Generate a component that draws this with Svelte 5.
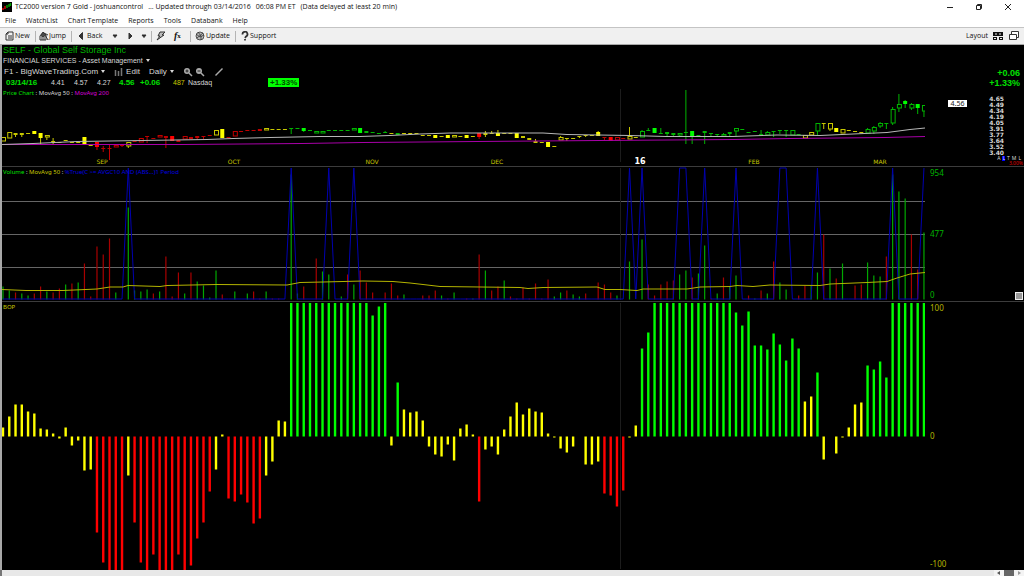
<script lang="ts">
  type Candle = {
    color: string;
    filled: boolean;
    top: number;
    bottom: number;
    high: number;
    low: number;
  };

  const colors: Record<string, string> = { y: '#c8c800', g: '#00b400', r: '#c00000' };
  const brights: Record<string, string> = { y: '#ffff00', g: '#00ff00', r: '#ff0000' };

  const step = 6.265;
  const xAt = (i: number) => 1 + i * step;

  // colour, hollow (h) / filled (f), body top, body bottom, high, low
  const candleData = `
    yh 51 55|yh 46 52|yf 47 49 47 51|yf 47 49 47 51|yf 47 48|yf 45 48|yf 47 52 47 58|yh 49 51 49 54|yf 55 56 52 58|yf 56 57
    yf 54 55|yf 56 57|yf 56 57|yf 51 59|yf 58 60|rf 56 61 56 64|rf 62 63 60 66|rf 62 63 59 74|rh 59 61|rf 59 60 58 61
    yh 56 60 56 62|rf 55 56|rh 52 56|rf 50 51 50 57|rf 52 53|rh 49 51|rf 50 52 50 62|rf 50 55|rf 54 56|rh 50 53
    rf 51 53|rf 50 52 50 54|rf 50 51 50 53|rf 49 50|yh 44 49|yf 43 52|rf 51 52|rh 45 50|rf 45 46|rf 44 45
    rf 44 45|rf 43 45|yh 42 44|yf 43 44|yf 43 44|yf 43 44|gf 42 43 42 48|gf 42 43|gf 42 45 42 46|gf 44 45
    gh 45 47|gh 45 47|gf 44 45|gf 44 45|gf 44 45|gf 44 45|gh 42 44|gf 42 47|gf 45 47|gf 46 47
    gf 47 48|gf 46 47 45 47|yf 47 48|gf 47 49|yf 47 48|yf 47 48|yf 47 48|yf 49 50|yf 49 50|yf 49 52
    yf 50 51|yf 49 52|yh 49 51|yf 50 51|yf 49 52|yf 50 51|rf 47 51 47 53|yf 47 49 45 51|yf 47 48 45 48|yf 47 50 44 50
    yf 47 48|yf 47 48|yf 47 52|yf 50 52|yf 52 54|yf 55 57 53 57|yf 56 57|yf 56 61|yf 60 61|yh 51 54 50 54
    yf 52 53 52 55|yf 52 53|yf 50 51 50 52|yf 49 50 49 51|yf 49 50|yf 46 50 45 50|rf 51 52 51 54|rf 51 55|rh 51 54|rf 52 53
    yh 50 53 41 53|yf 51 52|gh 45 51 44 51|gf 44 45 42 45|gf 42 47|gf 47 48 42 48|gf 46 48 46 50|gf 47 49 47 50|gh 47 49 47 51|gf 46 47 4 58
    gf 45 50 45 58|gf 49 50|gf 45 47 45 58|gf 47 48 47 51|gf 48 49 48 50|gh 48 50 47 51|gf 46 48 46 51|gh 42 45 42 50|gf 43 44|gf 46 47
    gf 45 46|gf 48 49 44 49|gh 46 49 45 49|gf 45 46 45 51|gf 44 45 44 48|gf 44 45 44 51|gh 44 49|gf 48 49|yh 49 52|yh 46 49
    gh 37 45 37 49|yf 37 38 37 43|yh 37 43 37 45|yf 42 46|yh 43 47|yf 44 45|yf 45 46|yf 46 47|gh 43 47 42 47|gh 41 45 40 48
    gh 37 40 36 42|gf 37 38 37 43|gh 23 37 21 39|gh 18 22 8 26|gf 15 18 14 22|gh 18 22 17 24|gf 18 22 18 28|gh 19 25 19 31`;

  const candles: Candle[] = candleData
    .trim()
    .split(/\||\n/)
    .map((entry) => {
      const [kind, top, bottom, high = top, low = bottom] = entry.trim().split(' ');
      return {
        color: kind[0],
        filled: kind[1] === 'f',
        top: +top,
        bottom: +bottom,
        high: +high,
        low: +low
      };
    });

  const volumeData = `
    g13 g9 r7 g6 g4 r6 r13 g8 r7 r11 g15 r16 g17 r36 r3 r53 r45 r61 g7 g0
    g92 g9 g8 g10 r6 g8 r43 r3 r27 g6 r27 g18 g14 g2 g29 r5 g0 g8 g0 g6
    r8 r1 g8 r1 r1 g0 g125 g6 r13 g0 r41 g28 g25 g0 g3 r25 g15 r29 r17 r7
    g0 r7 r16 r4 g5 g0 g0 r4 r4 r9 g4 r1 g7 g0 r1 g1 r45 g29 r9 r13
    g19 r3 r1 r12 r1 r16 r1 r20 g3 g7 r9 g5 g3 r6 g0 r17 r15 r7 g4 g0
    g38 g0 g60 r15 r4 r15 r18 r19 g25 g29 r22 g26 g54 r1 g6 r22 g13 g24 g0 r4
    g1 r9 g6 r38 g17 g10 g0 r4 r14 g14 g27 r65 g31 r21 g36 g0 r14 r15 g37 g24
    g23 r43 g125 g108 g101 r65 r30 g67`;

  const volume = volumeData
    .trim()
    .split(/\s+/)
    .map((v) => ({ color: v[0], size: +v.slice(1) }));

  const trueDays = [20, 46, 52, 56, 100, 102, 108, 109, 112, 117, 124, 125, 130, 142, 147];
  const signal = volume
    .map((_, i) => `${xAt(i)},${trueDays.includes(i) ? 1 : 132}`)
    .join(' ');

  const bop = [
    9, 20, 32, 32, 25, 23, 8, 7, 3, -2, 9, -9, -4, -34, -33, -96, -126, -134, -134, -134,
    -39, -86, -126, -134, -118, -134, -134, -134, -118, -134, -129, -102, -86, -55, -33, 2, -62, -65, -58, -66,
    -87, -82, -39, -25, 16, 15, 134, 134, 134, 134, 134, 134, 134, 134, 134, 134, 134, 134, 134, 121,
    130, 134, -9, 54, 27, 24, 25, 16, -10, -18, -20, -8, -24, 8, 12, 2, -65, -13, -10, -18,
    7, 20, 34, 22, 28, 25, 24, 3, -1, -12, -16, -10, 0, -28, -28, -25, -57, -59, -70, -54,
    -1, 11, 88, 104, 134, 134, 134, 134, 134, 134, 134, 134, 134, 134, 134, 134, 134, 124, 111, 125,
    91, 91, 87, 103, 92, 76, 98, 88, 35, 40, 64, -23, 0, -17, -1, 9, 32, 34, 71, 67,
    75, 59, 134, 134, 134, 134, 134, 134
  ];

  function bopColor(v: number) {
    if (v > 45) return '#00ff00';
    if (v < -45) return '#ff0000';
    return '#ffff00';
  }

  const months = [
    { name: 'SEP', x: 100 },
    { name: 'OCT', x: 232 },
    { name: 'NOV', x: 370 },
    { name: 'DEC', x: 495 },
    { name: '16', x: 638, year: true },
    { name: 'FEB', x: 752 },
    { name: 'MAR', x: 878 }
  ];

  const menus = ['File', 'WatchList', 'Chart Template', 'Reports', 'Tools', 'Databank', 'Help'];
  const prices = ['4.65', '4.49', '4.34', '4.19', '4.05', '3.91', '3.77', '3.64', '3.52', '3.40'];
</script>

<div class="app">
  <header class="titlebar">
    <svg class="titlebar__logo" viewBox="0 0 10 10" aria-hidden="true">
      <rect width="10" height="10" fill="#000" />
      <path d="M1 8V6M3 7V4" stroke="#e00000" stroke-width="1.4" />
      <path d="M5 6V3M7 5V2M8.5 4V1" stroke="#00a000" stroke-width="1.4" />
    </svg>
    <h1 class="titlebar__text">
      <span>TC2000 version 7 Gold - joshuancontrol</span>
      <span>... Updated through 03/14/2016</span>
      <span>06:08 PM ET</span>
      <span>(Data delayed at least 20 min)</span>
    </h1>
    <div class="titlebar__controls">
      <button aria-label="Minimize">
        <svg viewBox="0 0 8 8"><path d="M1 4.5h6" /></svg>
      </button>
      <button aria-label="Restore">
        <svg viewBox="0 0 8 8"><path d="M1.5 2.5h4v4h-4zM2.5 2.5v-1h4v4h-1" /></svg>
      </button>
      <button aria-label="Close">
        <svg viewBox="0 0 8 8"><path d="M1 1l6 6M7 1L1 7" /></svg>
      </button>
    </div>
  </header>

  <nav class="menubar">
    {#each menus as menu}
      <button>{menu}</button>
    {/each}
  </nav>

  <div class="toolbar">
    <button class="toolbar__new">
      <svg viewBox="0 0 10 10" aria-hidden="true">
        <path d="M3 1h5v8H1V3zM3 1v2H1M3 5h4M3 7h4" />
      </svg>New
    </button>
    <i class="toolbar__line"></i>
    <button class="toolbar__jump">
      <svg viewBox="0 0 10 10" aria-hidden="true">
        <path d="M1 9V5l3-4 3 3v5zM3 9V5h2v4M6 4l3 5M5 2l4 2" />
        <circle cx="4" cy="4" r="1.5" fill="#555" />
      </svg>Jump
    </button>
    <i class="toolbar__line"></i>
    <button class="toolbar__back">
      <svg viewBox="0 0 10 10" aria-hidden="true"><path d="M6.5 1.5v7L3 5z" fill="#333" /></svg>Back
    </button>
    <button class="toolbar__drop" aria-label="Back history">
      <svg viewBox="0 0 10 10" aria-hidden="true"><path d="M3 4h4L5 6.500z" fill="#222" /></svg>
    </button>
    <button class="toolbar__forward" aria-label="Forward">
      <svg viewBox="0 0 10 10" aria-hidden="true"><path d="M4 2l3 3-3 3z" fill="#333" /></svg>
    </button>
    <button class="toolbar__drop2" aria-label="Forward history">
      <svg viewBox="0 0 10 10" aria-hidden="true"><path d="M3 4h4L5 6.500z" fill="#222" /></svg>
    </button>
    <i class="toolbar__line"></i>
    <button class="toolbar__flash" aria-label="EasyScan">
      <svg viewBox="0 0 10 10" aria-hidden="true"><path d="M4 1h5L6 4h2L1 9l3-4H2z" fill="#bbb" /></svg>
    </button>
    <button class="toolbar__fx" aria-label="Formula"><em>f</em><small>x</small></button>
    <i class="toolbar__line"></i>
    <button class="toolbar__update">
      <svg viewBox="0 0 10 10" aria-hidden="true">
        <circle cx="5" cy="5" r="4" fill="#bbb" stroke-width=".8" />
        <path d="M1 3l4 3 4-2M3 1l3 4v4M2 7l6-5" stroke-width=".8" />
      </svg>Update
    </button>
    <i class="toolbar__line"></i>
    <button class="toolbar__support">
      <svg viewBox="0 0 10 10" aria-hidden="true">
        <path d="M2.500 3.500a2.500 2.500 0 1 1 3.500 2L5 7M5 8v1.500" stroke-width="1.8" />
      </svg>Support
    </button>
    <div class="toolbar__right">
      <button class="toolbar__layout">Layout
        <svg viewBox="0 0 10 10" aria-hidden="true">
          <path d="M0 1h10v4H0zM0 6h4v3H0zM6 6h4v3H6z" fill="#111" stroke="none" />
          <path d="M2 3h2M6 3h2M1 7.500h2M7 7.500h2" stroke="#eee" />
        </svg>
      </button>
      <button aria-label="Cascade">
        <svg viewBox="0 0 10 10" aria-hidden="true">
          <path d="M2.500 3V.5h7v6H8" fill="#fff" />
          <path d="M.5 3.500h7v5h-7z" fill="#fff" />
        </svg>
      </button>
    </div>
  </div>

  <main class="charts">
    <section class="pane price">
      <div class="plot">
        <div class="info">
          <h2>SELF - Global Self Storage Inc</h2>
          <button class="info__sector">FINANCIAL SERVICES - Asset Management <b class="caret"></b></button>
          <div class="info__tools">
            <button>F1 - BigWaveTrading.Com <b class="caret"></b></button>
            <button class="info__edit">
              <svg viewBox="0 0 10 10" aria-hidden="true">
                <path d="M1.500 3v6M4.500 4v5M7.500 1v8" stroke="#777" stroke-width="1.5" />
              </svg>Edit
            </button>
            <button>Daily <b class="caret"></b></button>
            <span class="info__zoom">
              <button aria-label="Zoom in">
                <svg viewBox="0 0 10 10"><circle cx="4" cy="4" r="3" fill="#aaa" /><path d="M6 6l3 3" stroke="#aaa" stroke-width="1.5" /><path d="M2.500 4h3M4 2.500v3" stroke="#222" /></svg>
              </button>
              <button aria-label="Zoom out">
                <svg viewBox="0 0 10 10"><circle cx="4" cy="4" r="3" fill="#aaa" /><path d="M6 6l3 3" stroke="#aaa" stroke-width="1.5" /><path d="M2.500 4h3" stroke="#222" /></svg>
              </button>
            </span>
            <button aria-label="Draw trendline">
              <svg viewBox="0 0 10 10"><path d="M1.500 8.500l7-7" stroke="#aaa" stroke-width="1.5" /></svg>
            </button>
          </div>
          <div class="info__quote">
            <b class="green">03/14/16</b>
            <span>4.41</span>
            <span>4.57</span>
            <span>4.27</span>
            <b class="green">4.56</b>
            <b class="green">+0.06</b>
            <span class="yellow">487</span>
            <span>Nasdaq</span>
            <b class="badge">+1.33%</b>
          </div>
        </div>
        <div class="canvas">
          <svg viewBox="0 0 923 80" preserveAspectRatio="none" role="img" aria-label="Price chart">
            <path d="M618.500 3V76" stroke="#1c1c1c" />
            {#each candles as c, i}
              <path
                d="M{xAt(i)} {c.high}V{c.top}M{xAt(i)} {c.bottom}V{c.low}"
                stroke={colors[c.color]}
              />
              {#if c.filled}
                <rect
                  x={xAt(i) - 2}
                  y={c.top}
                  width="4"
                  height={c.bottom - c.top}
                  fill={c.bottom - c.top > 2 ? brights[c.color] : colors[c.color]}
                />
              {:else}
                <rect
                  x={xAt(i) - 1.5}
                  y={c.top + 0.5}
                  width="4"
                  height={c.bottom - c.top - 0.5}
                  fill="#000"
                  stroke={colors[c.color]}
                />
              {/if}
            {/each}
            <polyline
              points="0,58.500 180,58.500 300,57.500 361,56.500 475,55.500 598,54.500 731,53.500 788,52.500 883,51.500 923,50.500"
              stroke="#a800a8"
            />
            <polyline
              points="0,58.500 31,57.500 75,55.500 141,54.500 205,53.500 231,52.500 268,51.500 318,50.500 358,50.500 388,49.500 418,48 448,47 541,47 565,48.500 628,49.500 664,50.500 731,50.500 775,49 818,49.500 851,48 885,46.500 908,43.500 923,42"
              stroke="#b8b8b8"
            />
          </svg>
          <p class="legend">
            <span class="green">Price Chart</span> : MovAvg 50 : <span class="magenta">MovAvg 200</span>
          </p>
          {#each months as month}
            <span class="month" class:month--year={month.year} style="left: {(month.x / 923) * 100}%">
              {month.name}
            </span>
          {/each}
        </div>
      </div>
      <aside class="axis price__axis">
        <strong class="price__change">+0.06<br />+1.33%</strong>
        <div class="price__scale">
          <span class="price__last">4.56</span>
          <ol>
            {#each prices as price}
              <li>{price}</li>
            {/each}
          </ol>
        </div>
        <div class="price__modes">
          <button>A</button><button class="selected">L</button><button>T</button><button>M</button><button>L</button>
        </div>
        <span class="price__pct">3.00%</span>
      </aside>
    </section>

    <section class="pane volume">
      <div class="plot canvas">
        <svg viewBox="0 0 923 134" preserveAspectRatio="none" role="img" aria-label="Volume chart">
          <path d="M0 34.500H923M0 67.500H923M0 100.500H923" stroke="#666" />
          <path d="M618.500 1V133" stroke="#1c1c1c" />
          {#each volume as v, i}
            <rect
              x={xAt(i) - 0.6}
              y={132.5 - v.size}
              width="1.2"
              height={v.size}
              fill={v.color === 'g' ? '#00a800' : '#a80000'}
            />
          {/each}
          <polyline points={signal} stroke="#0000b0" />
          <polyline
            points="0,122.500 24,123.500 61,123.500 95,122 108,120 121,120 126,118.500 158,119.500 165,118.500 215,117.500 285,118 298,115.500 321,115 361,114 391,114.500 408,116 421,117.500 438,119.500 518,120.500 526,121.500 541,120.500 595,120 603,122.500 618,122.500 635,123.500 641,122 685,122 698,120 728,119.500 735,118.500 751,119.500 768,118 818,118.500 828,117 865,115.500 885,114.500 895,111 908,107 923,105.500"
            stroke="#b4b400"
          />
        </svg>
        <p class="legend">
          <span class="green">Volume</span> : <span class="yellow">MovAvg 50</span> :
          <span class="blue">%True(C &gt;= AVGC10 AND (ABS...)1 Period</span>
        </p>
      </div>
      <aside class="axis volume__axis">
        <span>954</span>
        <span>477</span>
        <span>0</span>
      </aside>
      <button class="volume__grip" aria-label="Resize pane"></button>
    </section>

    <section class="pane bop">
      <div class="plot canvas">
        <svg viewBox="0 0 923 268" preserveAspectRatio="none" role="img" aria-label="Balance of power chart">
          <path d="M618.500 1V267" stroke="#1c1c1c" />
          {#each bop as v, i}
            {#if v}
              <rect
                x={xAt(i) - 1.2}
                y={v > 0 ? Math.max(1, 134.5 - v) : 134.5}
                width="2.4"
                height={Math.min(133.5, Math.abs(v))}
                fill={bopColor(v)}
              />
            {/if}
          {/each}
        </svg>
        <p class="legend"><span class="yellow">BOP</span></p>
      </div>
      <aside class="axis bop__axis">
        <span>100</span>
        <span>0</span>
        <span>-100</span>
      </aside>
    </section>
  </main>

  <footer class="scrollbar">
    <button aria-label="Scroll left"><svg viewBox="0 0 10 6"><path d="M6 1v4L3 3z" fill="#555" /></svg></button>
    <span class="scrollbar__thumb"></span>
    <button aria-label="Scroll right"><svg viewBox="0 0 10 6"><path d="M4 1v4l3-2z" fill="#999" /></svg></button>
  </footer>
</div>

<style>
  :global(body) {
    margin: 0;
    background: #000;
  }

  .app {
    display: flex;
    flex-direction: column;
    height: 100vh;
    min-height: 480px;
    font-family: 'Open Sans', 'Noto Sans', sans-serif;
    font-size: 7px;
    line-height: 10px;
    color: #111;
    overflow: hidden;
  }

  button {
    display: flex;
    align-items: center;
    padding: 0;
    border: 0;
    background: none;
    color: inherit;
    font: inherit;
    white-space: nowrap;
    cursor: pointer;
  }

  h1,
  h2,
  p,
  ol {
    margin: 0;
    padding: 0;
    font: inherit;
    list-style: none;
  }

  svg {
    display: block;
    fill: none;
    flex: none;
  }

  .titlebar {
    display: flex;
    align-items: center;
    height: 14px;
    padding-left: 2px;
    background: #fff;
  }

  .titlebar__logo {
    width: 10px;
    height: 10px;
    margin-right: 3px;
  }

  .titlebar__text {
    display: flex;
    gap: 5px;
    white-space: nowrap;
  }

  .titlebar__controls {
    display: flex;
    gap: 21px;
    margin-left: auto;
    padding-right: 12px;
  }

  .titlebar__controls svg {
    width: 8px;
    height: 8px;
    stroke: #222;
  }

  .menubar {
    display: flex;
    gap: 10px;
    height: 13px;
    padding-left: 5px;
    background: #fff;
  }

  .toolbar {
    display: flex;
    align-items: center;
    box-sizing: border-box;
    height: 18px;
    padding: 0 5px;
    border-top: 1px solid #c4c4c4;
    border-bottom: 1px solid #a8a8a8;
    background: #f0f0f0;
  }

  .toolbar svg {
    width: 10px;
    height: 10px;
    stroke: #333;
  }

  .toolbar__line {
    width: 1px;
    height: 11px;
    background: #b4b4b4;
  }

  .toolbar__new {
    width: 30px;
  }

  .toolbar__jump {
    width: 32px;
    margin-left: 3px;
  }

  .toolbar__back {
    gap: 1px;
    width: 34px;
    margin-left: 4px;
  }

  .toolbar__forward {
    margin: 0 4px 0 5px;
  }

  .toolbar__drop2 {
    margin-right: 2px;
  }

  .toolbar__flash {
    margin: 0 8px 0 4px;
  }

  .toolbar__fx {
    width: 16px;
    font-family: 'Liberation Serif', serif;
    font-size: 10px;
    font-weight: bold;
  }

  .toolbar__fx small {
    font-size: 7px;
  }

  .toolbar__update {
    gap: 1px;
    width: 40px;
    margin-left: 4px;
  }

  .toolbar__support {
    margin-left: 4px;
  }

  .toolbar__right {
    display: flex;
    gap: 6px;
    margin-left: auto;
  }

  .toolbar__layout {
    gap: 5px;
  }

  .charts {
    display: flex;
    flex: 1;
    flex-direction: column;
    min-height: 0;
    border-left: 2px solid #a8a8a8;
    background: #000;
    color: #d8d8d8;
    font-family: 'Liberation Sans', Arial, sans-serif;
    font-size: 8px;
  }

  .pane {
    position: relative;
    display: flex;
    box-sizing: border-box;
    min-height: 0;
    border-bottom: 1px solid #3c3c3c;
  }

  .price {
    flex: 121 1 0;
  }

  .volume {
    flex: 134 1 0;
  }

  .bop {
    flex: 268 1 0;
    border-bottom: 0;
  }

  .plot {
    display: flex;
    flex: 1;
    flex-direction: column;
    min-width: 0;
  }

  .canvas {
    position: relative;
    flex: 1;
    min-height: 0;
  }

  .canvas > svg {
    width: 100%;
    height: 100%;
  }

  .axis {
    box-sizing: border-box;
    flex: none;
    width: 99px;
    font-family: 'Noto Sans', sans-serif;
  }

  .legend {
    position: absolute;
    top: 0;
    left: 1px;
    font-family: 'Noto Sans', sans-serif;
    font-size: 6px;
    line-height: 10px;
    white-space: nowrap;
  }

  .price .legend {
    top: 2px;
  }

  .green {
    color: #00e000;
  }

  .yellow {
    color: #c8c800;
  }

  .magenta {
    color: #d800d8;
  }

  .blue {
    color: #0000e0;
  }

  .caret {
    margin-left: 3px;
    border: 2px solid transparent;
    border-top: 3px solid #d8d8d8;
    border-bottom: 0;
  }

  .info {
    height: 41px;
  }

  .info h2 {
    height: 11px;
    padding-left: 1px;
    color: #00b400;
    font-size: 9px;
    line-height: 11px;
  }

  .info__sector {
    padding-left: 1px;
    font-size: 7px;
    line-height: 9px;
  }

  .info__tools {
    display: flex;
    gap: 9px;
    align-items: center;
    height: 13px;
    padding-left: 2px;
  }

  .info__tools svg {
    width: 10px;
    height: 10px;
  }

  .info__edit {
    gap: 2px;
  }

  .info__zoom {
    display: flex;
    gap: 2px;
  }

  .info__quote {
    display: grid;
    grid-template-columns: 45px 23px 23px 22px 21px 33px 15px 80px auto;
    justify-content: start;
    padding-left: 4px;
    font-size: 7px;
    line-height: 9px;
  }

  .info__quote b {
    font-size: 8px;
  }

  .info__quote .badge {
    padding: 0 2px;
    background: #00ff00;
    color: #004800;
  }

  .month {
    position: absolute;
    bottom: 1px;
    color: #c8c800;
    font-family: 'DejaVu Sans', sans-serif;
    font-size: 6px;
    line-height: 6px;
    transform: translateX(-50%);
  }

  .month--year {
    color: #fff;
    font-size: 8px;
    font-weight: bold;
  }

  .price__axis {
    display: flex;
    flex-direction: column;
    align-items: flex-end;
    padding-top: 23px;
  }

  .price__change {
    padding-right: 4px;
    color: #00e000;
    font-family: 'Liberation Sans', Arial, sans-serif;
    font-size: 9px;
    line-height: 10px;
    text-align: right;
  }

  .price__scale {
    display: flex;
    justify-content: space-between;
    align-items: flex-start;
    box-sizing: border-box;
    width: 100%;
    padding: 8px 20px 0 23px;
  }

  .price__scale li {
    font-family: 'DejaVu Sans', sans-serif;
    font-size: 6px;
    font-weight: bold;
    line-height: 6px;
  }

  .price__last {
    width: 19px;
    margin-top: 4px;
    background: #fff;
    color: #222;
    font-size: 7px;
    line-height: 7px;
    text-align: center;
  }

  .price__modes {
    display: flex;
    gap: 2px;
    padding-right: 3px;
    font-size: 5px;
    line-height: 5px;
  }

  .price__modes .selected {
    background: #0000ff;
  }

  .price__pct {
    padding-right: 1px;
    color: #e00000;
    font-size: 5px;
    line-height: 5px;
  }

  .volume__axis,
  .bop__axis {
    display: flex;
    flex-direction: column;
    justify-content: space-between;
    padding: 1px 0 1px 5px;
  }

  .volume__axis {
    color: #00b400;
  }

  .bop__axis {
    color: #b4b400;
  }

  .volume__grip {
    position: absolute;
    right: 1px;
    bottom: 1px;
    width: 8px;
    height: 8px;
    border: 1px solid #eee;
    background: #999;
  }

  .scrollbar {
    display: flex;
    justify-content: flex-end;
    height: 6px;
    border-left: 2px solid #777;
    background: #e8e8e8;
  }

  .scrollbar svg {
    width: 10px;
    height: 6px;
  }

  .scrollbar button {
    background: #f4f4f4;
  }

  .scrollbar__thumb {
    width: 10px;
    background: #666;
  }
</style>
